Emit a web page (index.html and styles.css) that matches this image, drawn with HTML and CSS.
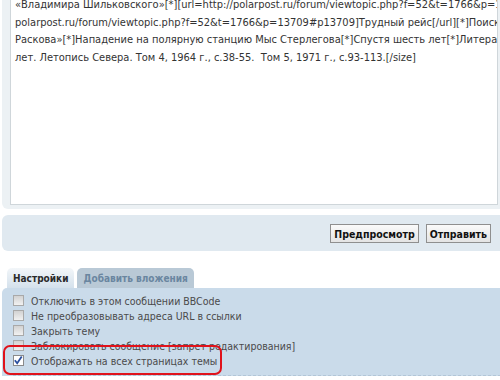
FILE: index.html
```html
<!DOCTYPE html>
<html lang="ru">
<head>
    <meta charset="UTF-8" />
    <title>Ответить</title>
    <link rel="stylesheet" href="styles.css">
</head>
<body>
    <div class="page">
        <div class="editor-panel">
            <div class="message-box">
                <div class="message-text">«Владимира Шильковского»[*][url=http://polarpost.ru/forum/viewtopic.php?f=52&amp;t=1766&amp;p=13708#p13708]Гибель самолёта
polarpost.ru/forum/viewtopic.php?f=52&amp;t=1766&amp;p=13709#p13709]Трудный рейс[/url][*]Поиски летчицы
Раскова»[*]Нападение на полярную станцию Мыс Стерлегова[*]Спустя шесть лет[*]Литература[list]
лет. Летопись Севера. Том 4, 1964 г., с.38-55.  Том 5, 1971 г., с.93-113.[/size]</div>
            </div>
        </div>

        <div class="submit-panel">
            <button type="button" class="btn">Предпросмотр</button>
            <button type="button" class="btn">Отправить</button>
        </div>

        <div class="tabs">
            <span class="tab active">Настройки</span>
            <span class="tab">Добавить вложения</span>
        </div>

        <div class="options-panel">
            <div class="options">
                <label class="option"><span class="box"></span>Отключить в этом сообщении BBCode</label>
                <label class="option"><span class="box"></span>Не преобразовывать адреса URL в ссылки</label>
                <label class="option"><span class="box"></span>Закрыть тему</label>
                <label class="option"><span class="box"></span>Заблокировать сообщение [запрет редактирования]</label>
                <label class="option"><span class="box checked"><svg width="11" height="11" viewBox="0 0 11 11"><path d="M2 5.2 L4.6 8.6 L9.6 1.2" fill="none" stroke="#2a4f9e" stroke-width="2"/></svg></span>Отображать на всех страницах темы</label>
            </div>
        </div>

        <div class="highlight"></div>
    </div>
</body>
</html>
```

FILE: styles.css
```css
body {
    margin: 0;
    overflow: hidden;
    background-color: #fff;
    font-family: "DejaVu Sans", Verdana, sans-serif;
    color: #333;
}

.page {
    position: relative;
    display: flex;
    flex-direction: column;
    width: 504px;
    margin-left: 2px;
}

.editor-panel {
    margin-top: -16px;
    padding: 6px 8px 4px;
    background-color: #ecf1f4;
    border-radius: 0 0 6px 6px;
}

.message-box {
    height: 215px;
    box-sizing: border-box;
    padding: 5px 4px;
    background-color: #fff;
    border: 1px solid #cfd6da;
    overflow: hidden;
}

.message-text {
    white-space: pre;
    font-size: 11px;
    font-stretch: condensed;
    line-height: 17.5px;
    color: #333;
}

.submit-panel {
    display: flex;
    justify-content: flex-end;
    gap: 7px;
    margin-top: 6px;
    padding: 9px 15px 8px 0;
    background-color: #e0e9f0;
    border-radius: 6px;
}

.btn {
    height: 19px;
    padding: 0 3px;
    font-family: inherit;
    font-stretch: condensed;
    font-size: 10.5px;
    font-weight: bold;
    color: #111;
    background: linear-gradient(#fafafa, #e4e4e4);
    border: 1px solid #8f8f8f;
    border-radius: 0;
}

.tabs {
    display: flex;
    gap: 3px;
    margin-top: 17px;
    padding-left: 5px;
}

.tab {
    height: 20px;
    line-height: 21px;
    padding: 0 6px;
    font-size: 10px;
    font-stretch: condensed;
    font-weight: bold;
    color: #6a86a0;
    background-color: #b9c9d6;
    border-radius: 5px 5px 0 0;
}

.tab.active {
    color: #2b2b2b;
    background: linear-gradient(#f2f6f9, #d4e1ec);
}

.options-panel {
    padding: 5px 0 0 11px;
    background-color: #cadbea;
    border-radius: 5px 0 0 0;
}

.options {
    padding-bottom: 7px;
    border-bottom: 1px dashed #b3c6d7;
}

.option {
    display: flex;
    align-items: center;
    gap: 7px;
    height: 15px;
    font-size: 10.5px;
    font-stretch: condensed;
    color: #4a4a4a;
}

.box {
    display: flex;
    width: 9px;
    height: 9px;
    border: 1px solid #a9a9a9;
    background: linear-gradient(#d2d2d2, #f1f1f1);
}

.box.checked {
    background: #fff;
    border-color: #8a8a8a;
}

.box svg {
    margin: -1px 0 0 -1px;
}

.highlight {
    position: absolute;
    left: 1px;
    top: 345px;
    width: 215px;
    height: 26px;
    border: 2px solid #e0121b;
    border-radius: 7px;
}
```
